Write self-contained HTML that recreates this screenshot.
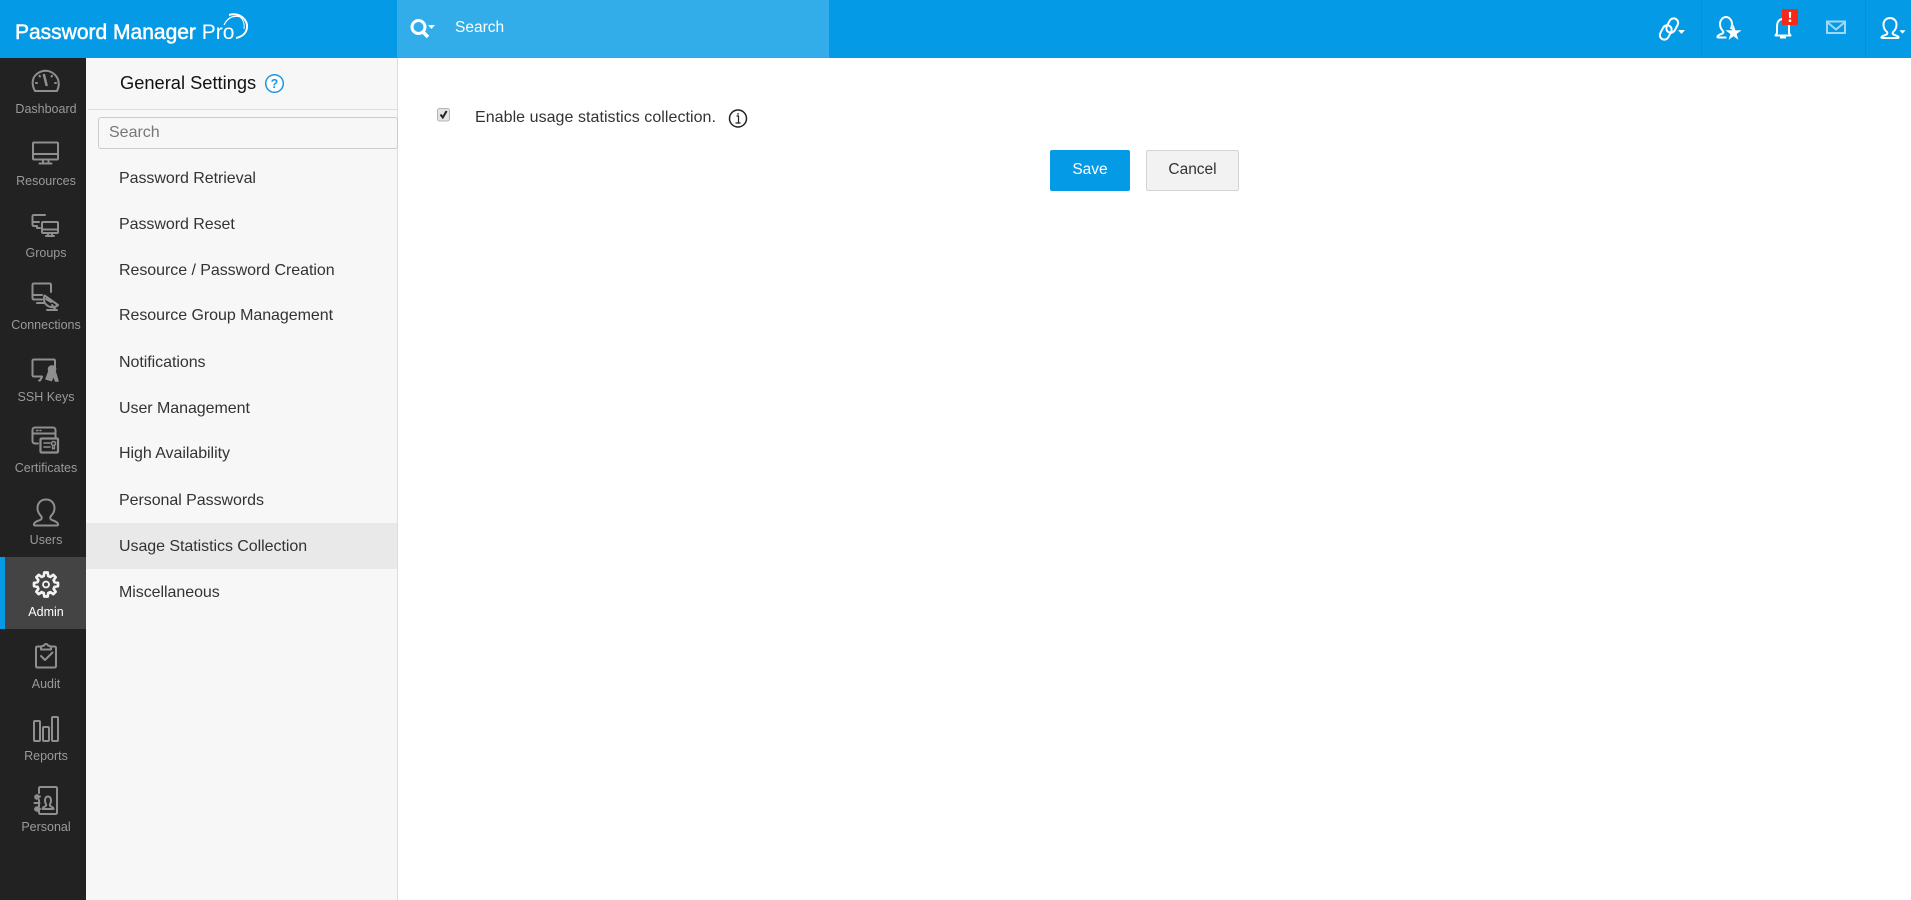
<!DOCTYPE html>
<html><head><meta charset="utf-8"><title>Password Manager Pro</title>
<style>
html,body{margin:0;padding:0;width:1911px;height:900px;overflow:hidden;background:#fff;font-family:"Liberation Sans",sans-serif;}
.a{position:absolute;white-space:nowrap}
#hdr{left:0;top:0;width:1911px;height:58px;background:#059ae6}
#srch{left:397px;top:0;width:432px;height:58px;background:#33ade9}
#side{left:0;top:58px;width:86px;height:842px;background:#222}
#act{left:0;top:557px;width:86px;height:72px;background:#444}
#bar{left:0;top:557px;width:5px;height:72px;background:#059ae6}
#panel{left:86px;top:58px;width:311px;height:842px;background:#f7f7f7;border-right:1px solid #ddd}
.nl{left:0;width:92px;text-align:center;font-size:12.5px;line-height:16px;color:#9a9a9a}
.mi{left:119px;font-size:16px;line-height:20px;color:#333;letter-spacing:-.05px}
svg{position:absolute;left:0;top:0;overflow:visible}
</style></head><body>
<div class="a" id="hdr"></div>
<div class="a" id="srch"></div>
<div class="a" id="side"></div>
<div class="a" id="act"></div>
<div class="a" id="bar"></div>
<div class="a" id="panel"></div>

<div class="a" style="left:15px;top:19px;font-size:21px;line-height:28px;color:#fff;-webkit-text-stroke:.5px #fff">Password Manager <span style="-webkit-text-stroke:0">Pro</span></div>
<div class="a" style="left:455px;top:18px;font-size:15.500px;line-height:20px;color:#fff">Search</div>

<div class="a" style="left:120px;top:70px;font-size:18.300px;line-height:26px;color:#111">General Settings</div>
<div class="a" style="left:88px;top:109px;width:309px;height:1px;background:#ddd"></div>
<div class="a" style="left:98px;top:117px;width:300px;height:32px;box-sizing:border-box;border:1px solid #ccc;border-radius:3px;background:#f7f7f7"></div>
<div class="a" style="left:109px;top:123px;font-size:16px;line-height:20px;color:#777">Search</div>

<div class="a" style="left:86px;top:523px;width:311px;height:46px;background:#e9e9e9"></div>
<div class="a mi" style="top:169px">Password Retrieval</div>
<div class="a mi" style="top:215px">Password Reset</div>
<div class="a mi" style="top:261px">Resource / Password Creation</div>
<div class="a mi" style="top:306px">Resource Group Management</div>
<div class="a mi" style="top:353px">Notifications</div>
<div class="a mi" style="top:399px">User Management</div>
<div class="a mi" style="top:444px">High Availability</div>
<div class="a mi" style="top:491px">Personal Passwords</div>
<div class="a mi" style="top:537px">Usage Statistics Collection</div>
<div class="a mi" style="top:583px">Miscellaneous</div>

<div class="a nl" style="top:101px">Dashboard</div>
<div class="a nl" style="top:173px">Resources</div>
<div class="a nl" style="top:245px">Groups</div>
<div class="a nl" style="top:317px">Connections</div>
<div class="a nl" style="top:389px">SSH Keys</div>
<div class="a nl" style="top:460px">Certificates</div>
<div class="a nl" style="top:532px">Users</div>
<div class="a nl" style="top:604px;color:#fff">Admin</div>
<div class="a nl" style="top:676px">Audit</div>
<div class="a nl" style="top:748px">Reports</div>
<div class="a nl" style="top:819px">Personal</div>

<div class="a" style="left:475px;top:108px;font-size:16px;line-height:20px;color:#333;letter-spacing:.05px">Enable usage statistics collection.</div>
<div class="a" style="left:1050px;top:150px;width:80px;height:41px;background:#059ae6;border-radius:2px;color:#fff;font-size:15.500px;line-height:40px;text-align:center">Save</div>
<div class="a" style="left:1146px;top:150px;width:93px;height:41px;box-sizing:border-box;background:#f2f2f2;border:1px solid #d4d4d4;border-radius:2px;color:#333;font-size:15.500px;line-height:38px;text-align:center">Cancel</div>

<svg width="1911" height="900" viewBox="0 0 1911 900" fill="none">
<!-- logo swoosh -->
<g stroke="#fff" fill="none">
<path d="M224 25C228 17 234 15 241 17" stroke-width="1.200"/>
<path d="M229 15C240 12 248 20 247 28C246 34 241 37 236 38" stroke-width="2"/>
<path d="M234 14C242 16 245 22 244 29" stroke-width="1"/>
</g>
<!-- search glass -->
<g stroke="#fff">
<circle cx="418.500" cy="27" r="6.500" stroke-width="3"/>
<path d="M423 32l5 5" stroke-width="3.500"/>
</g>
<path d="M428 25h7l-3.500 4z" fill="#fff"/>
<!-- header dividers -->
<path d="M1701.500 0V58M1865.500 0V58" stroke="#0b8cd4"/>
<!-- link -->
<g stroke="#fff" stroke-width="2">
<rect x="-4.500" y="-8" width="9" height="15" rx="4.500" transform="translate(1672 26) rotate(28)"/>
<rect x="-4.500" y="-7" width="9" height="15" rx="4.500" transform="translate(1666 32) rotate(28)"/>
</g>
<path d="M1678 30h7l-3.500 4z" fill="#fff"/>
<!-- user star -->
<g stroke="#fff" stroke-width="2" stroke-linejoin="round">
<path d="M1723 31c-2-2-3-4-3-7 0-4 3-7 6-7s6 3 6 7c0 2-.5 3.500-1 5M1723 31c.6 1 .5 2-.5 2.500-2 1-4 1-5 3-.3.700 0 1 1 1h8"/>
</g>
<path d="M1733.500 24.500l1.900 5.900 6.100-.1-4.900 3.700 1.800 5.900-4.900-3.600-4.900 3.600 1.800-5.900-4.900-3.700 6.100.1z" fill="#fff"/>
<!-- bell -->
<g stroke="#fff" stroke-width="2" stroke-linejoin="round">
<path d="M1777 33v-6c0-5 2-8 6-8s6 3 6 8v6l1.500 2.500h-15z"/>
<path d="M1780 37.500h6"/>
</g>
<rect x="1782" y="9" width="16" height="16" rx="1" fill="#f5291a"/>
<path d="M1788.800 12h2.400l-.3 6h-1.800zM1788.800 19.500h2.400v2.500h-2.400z" fill="#fff"/>
<!-- mail -->
<g stroke="#9fd8f5" stroke-width="2">
<rect x="1827" y="21.500" width="18" height="11.500"/>
<path d="M1827 22l9 7.500 9-7.500"/>
</g>
<!-- profile -->
<g stroke="#fff" stroke-width="2" stroke-linejoin="round">
<path d="M1887 32c-2.500-2-3.500-5-3.500-7.500 0-4 3-6.500 6.500-6.500s6.500 2.500 6.500 6.500c0 2.500-1 5.500-3.500 7.500-.6 1-.5 2 .5 2.500 2 1 4 1 5 2.500.4.800 0 1-1 1h-15c-1 0-1.400-.2-1-1 1-1.500 3-1.500 5-2.500 1-.5 1.100-1.500.5-2.500z"/>
</g>
<path d="M1899 30h7l-3.500 4z" fill="#fff" stroke="#059ae6" stroke-width=".5"/>

<!-- help -->
<circle cx="274.500" cy="83.500" r="8.800" stroke="#1d97e0" stroke-width="1.500" fill="#fff"/>
<text x="274.500" y="88" text-anchor="middle" font-family="Liberation Sans" font-size="12.500" font-weight="bold" fill="#1d97e0">?</text>

<!-- checkbox -->
<rect x="437.500" y="108.500" width="12" height="12.500" rx="2" fill="#e4e4e4" stroke="#b4b4b4"/>
<path d="M440.500 114.500l2.300 3 3.800-6.500" stroke="#222" stroke-width="2"/>

<!-- info -->
<circle cx="738" cy="118.500" r="8.500" stroke="#222" stroke-width="1.500"/>
<path d="M736.500 116h2v7M735.500 123h5M738 113v1.800" stroke="#222" stroke-width="1.200"/>

<!-- sidebar icons -->
<g stroke="#8f8f8f" stroke-width="2" stroke-linejoin="round" stroke-linecap="round">
<!-- dashboard -->
<path d="M35 91C31 84 32 76 39 72.500C45 69 52 71 56 76C60 81 59 87 57 91Z"/>
<path d="M44 75l2.500 10" stroke-width="2.500"/>
<path d="M36 83h1M55 83h1M39.500 75.800l.5.700M52 75.800l-.5.700"/>
<!-- resources -->
<rect x="33" y="142.500" width="25" height="17" rx="1"/>
<path d="M33 154h25M43 160v3M48.500 160v3M39.500 163.500h12"/>
<!-- groups -->
<path d="M45 215H34c-1 0-1.500 .5-1.500 1.500v8c0 1 .5 1.500 1.500 1.500h3M37 226v2h3"/>
<path d="M33 222h6"/>
<rect x="42" y="222" width="16" height="11" rx="1"/>
<path d="M42 229.500h16M48 233v2.500M52 233v2.500M46 236h8"/>
<!-- connections -->
<path d="M51 292v-7c0-1-.5-1.500-1.500-1.500H34c-1 0-1.500 .5-1.500 1.500v13c0 1 .5 1.500 1.500 1.500h8M37 303h7M33 295h9"/>
<path d="M44.500 295.500c-1.500 4.500 0 8.500 3.500 10.500 3.500 2 7.500 1.500 10-1z"/>
<path d="M52 305l3 4M47 310h10M46 299l5 3"/>
<!-- ssh keys -->
<path d="M55 368v-7c0-.800-.5-1.500-1.500-1.500H34c-1 0-1.500 .700-1.500 1.500v14c0 1 .5 1.500 1.500 1.500h8M42 377l-2 3.500h-1"/>
<path d="M46 379l3-8c-1.500-3 .5-5 3-5 3 0 4.500 2.500 3 5l3 10h-2.500l-2-5.500-2 5z" fill="#8f8f8f" stroke-width="1.500"/>
<!-- certificates -->
<path d="M38 443.500h-3c-1.500 0-2.500-1-2.500-2.500v-11c0-1.500 1-2.500 2.500-2.500h18c1.500 0 2.500 1 2.500 2.500v7" stroke-width="2"/>
<path d="M33 433.500h22"/>
<rect x="40.500" y="438.500" width="17.500" height="14" rx="1" stroke-width="2.200"/>
<path d="M44 443h6M44 447h6" stroke-width="1.600"/>
<circle cx="53.500" cy="443.500" r="2" stroke-width="1.500"/>
<path d="M52.500 446v3l1-1 1 1v-3" stroke-width="1.200"/>
<path d="M36.500 430.500h1.500M40 430.500h1" stroke-width="1.500"/>
<!-- users -->
<path d="M41 516c-2.500-2.500-3.500-5-3.500-8 0-5 3.500-8.500 8.500-8.500s8.500 3.500 8.500 8.500c0 3-1 5.500-3.500 8-1 1-1 2.500 0 3.500 2 1.500 6 1.500 7 4.500.3 1-.2 1.500-1 1.500H35c-.8 0-1.300-.5-1-1.500 1-3 5-3 7-4.500 1-1 1-2.500 0-3.500z"/>
<!-- audit -->
<path d="M41 646.500h-3.500c-1 0-1.500 .5-1.500 1.500v18c0 1 .5 1.500 1.500 1.500h17c1 0 1.500-.5 1.500-1.500v-18c0-1-.5-1.500-1.500-1.500H52"/>
<path d="M41 649.500v-3l3-1c.5-1 1-1.500 2-1.500s1.500 .5 2 1.500l3 1v3z"/>
<path d="M41 656l4 4 7.500-7.500"/>
<!-- reports -->
<rect x="34" y="721" width="6" height="20" rx="1"/>
<rect x="43" y="727" width="6" height="14" rx="1"/>
<rect x="52" y="717" width="6" height="24" rx="1"/>
<!-- personal -->
<g transform="translate(0 5)">
<path d="M39 788v-4.500c0-1 .5-1.500 1.500-1.500h15c1 0 1.500 .5 1.500 1.500v24c0 1-.5 1.500-1.500 1.500h-15c-1 0-1.500-.5-1.500-1.500v-2.500M39 795v7"/>
<path d="M36 791.500h4M35 804h5"/>
<circle cx="37" cy="792" r="1.800"/><circle cx="37" cy="804" r="1.800"/>
<path d="M34.500 798h5"/>
<path d="M44 802c2.500-1 2.500-2 1.700-3.500-1.200-2-1-7 2.300-7s3.500 5 2.300 7c-.8 1.500-.8 2.500 1.700 3.500 1 .5 1.500 1 1.500 2H42.500c0-1 .5-1.500 1.500-2z"/>
</g>
</g>
<!-- admin gear -->
<g stroke="#f2f2f2" stroke-width="2.900" stroke-linejoin="round" transform="translate(46 584.500) scale(.93)">
<path d="M-2.460-9.180L-1.810-12.870L1.810-12.870L2.460-9.180L4.750-8.230L7.820-10.380L10.380-7.820L8.230-4.750L9.180-2.460L12.870-1.810L12.870 1.810L9.180 2.460L8.230 4.750L10.380 7.820L7.820 10.380L4.750 8.230L2.460 9.180L1.810 12.870L-1.810 12.870L-2.460 9.180L-4.750 8.230L-7.820 10.380L-10.380 7.820L-8.230 4.750L-9.180 2.460L-12.870 1.810L-12.870-1.810L-9.180-2.460L-8.230-4.750L-10.380-7.820L-7.820-10.380L-4.750-8.230Z"/>
<circle cx="0" cy="0" r="3.200" stroke-width="2"/>
</g>
</svg>
</body></html>
